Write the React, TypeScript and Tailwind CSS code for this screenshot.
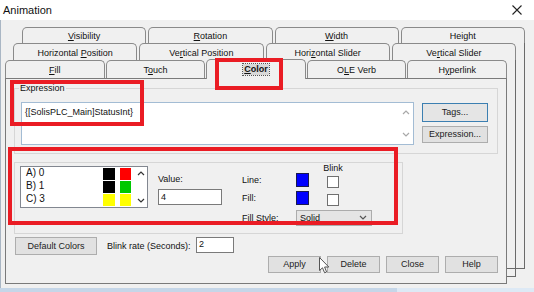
import React from "react";

function Lbl({ text, u }: { text: string; u?: number }) {
  if (u === undefined) return <span>{text}</span>;
  return (
    <span>
      {text.slice(0, u)}
      <u>{text[u]}</u>
      {text.slice(u + 1)}
    </span>
  );
}

const tabBase =
  "flex-1 border-t border-l border-r border-[#8a8a8a] rounded-t-[5px] bg-[#f0f0f0] flex justify-center items-center leading-none text-[#111]";

function Chevron({ up, color }: { up?: boolean; color: string }) {
  return (
    <svg width="8" height="6" viewBox="0 0 8 6">
      <polyline
        points={up ? "1,5 4,2 7,5" : "1,1 4,4 7,1"}
        fill="none"
        stroke={color}
        strokeWidth="1.2"
      />
    </svg>
  );
}

const Btn = ({ children, w, h, focus }: { children: React.ReactNode; w: string; h: string; focus?: boolean }) => (
  <div
    className={`${w} ${h} border ${focus ? "border-[#3c7fb1] bg-[#e5e5e5]" : "border-[#adadad] bg-[#e1e1e1]"} flex items-center justify-center leading-none text-[#222]`}
  >
    {children}
  </div>
);

export default function App() {
  const rows = [
    { t: "A) 0", c1: "bg-[#000000]", c2: "bg-[#ff0000]" },
    { t: "B) 1", c1: "bg-[#000000]", c2: "bg-[#00c800]" },
    { t: "C) 3", c1: "bg-[#ffff00]", c2: "bg-[#ffff00]" },
  ];
  return (
    <div className="relative w-[534px] h-[292px] overflow-hidden bg-[#f0f0f0] font-['Liberation_Sans',Arial,sans-serif] text-[9px] text-[#111]">
      {/* Title bar */}
      <div className="h-[20px] bg-white flex items-center justify-between pl-[3px] pr-[12px]">
        <span className="text-[11px] text-[#111]">Animation</span>
        <svg width="10" height="10" viewBox="0 0 10 10">
          <path d="M0.5 0.5 L9.5 9.5 M9.5 0.5 L0.5 9.5" stroke="#222" strokeWidth="1.1" />
        </svg>
      </div>

      {/* Body */}
      <div className="relative h-[268px] pt-[7px] shadow-[inset_1px_0_0_#a9b6c4]">
        {/* back pages edges */}
        <div className="absolute left-[22px] top-[23px] w-[503px] h-[226px] border-r border-b border-[#6a6a6a]" />
        <div className="absolute left-[13px] top-[39px] w-[503px] h-[218px] border-r border-b border-[#6a6a6a]" />

        {/* Row 1 */}
        <div className="ml-[22px] w-[503px] h-[16px] flex gap-[2px]">
          <div className={`${tabBase} pt-[2px]`}><Lbl text="Visibility" u={0} /></div>
          <div className={`${tabBase} pt-[2px]`}><Lbl text="Rotation" u={0} /></div>
          <div className={`${tabBase} pt-[2px]`}><Lbl text="Width" u={0} /></div>
          <div className={`${tabBase} pt-[2px]`}><Lbl text="Height" /></div>
        </div>
        {/* Row 2 */}
        <div className="relative ml-[13px] w-[503px] h-[17px] flex gap-[2px]">
          <div className={`${tabBase} pt-[2px]`}><Lbl text="Horizontal Position" u={11} /></div>
          <div className={`${tabBase} pt-[2px]`}><Lbl text="Vertical Position" u={2} /></div>
          <div className={`${tabBase} pt-[2px]`}><Lbl text="Horizontal Slider" u={4} /></div>
          <div className={`${tabBase} pt-[2px]`}><Lbl text="Vertical Slider" u={2} /></div>
        </div>
        {/* Row 3 */}
        <div className="relative ml-[5px] w-[502px] h-[18px] flex gap-[1px]">
          <div className={`${tabBase} pt-[1px]`}><Lbl text="Fill" u={0} /></div>
          <div className={`${tabBase} pt-[1px]`}><Lbl text="Touch" u={1} /></div>
          <div className={`${tabBase} relative z-20 self-start -mt-[1px] h-[20px] pb-[1px]`}>
            <span className="font-bold outline outline-1 outline-dotted outline-[#555] bg-[#d8d8d8] px-[1px] py-[1px]">
              <u>C</u>olor
            </span>
          </div>
          <div className={`${tabBase} pt-[1px]`}><Lbl text="OLE Verb" u={1} /></div>
          <div className={`${tabBase} pt-[1px]`}><Lbl text="Hyperlink" u={1} /></div>
        </div>

        {/* Front page */}
        <div className="relative z-10 ml-[5px] w-[502px] h-[206px] border border-[#7a7a7a] bg-[#f0f0f0] flex flex-col">
          {/* Expression group */}
          <div className="ml-[8px] mt-[9px] w-[484px] h-[66px] border border-[#d6d6d6] flex flex-col">
            <div className="-mt-[6px] ml-[4px] px-[1px] w-fit h-[10px] leading-[10px] bg-[#f0f0f0]">Expression</div>
            <div className="flex mt-[9px] ml-[6px]">
              <div className="w-[393px] h-[43px] border border-[#a3bcd4] bg-white flex">
                <div className="flex-1 pl-[3px] pt-[4px] leading-[10px]">{"{[SolisPLC_Main]StatusInt}"}</div>
                <div className="w-[14px] flex flex-col justify-between items-center py-[6px]">
                  <Chevron up color="#a8a8a8" />
                  <Chevron color="#a8a8a8" />
                </div>
              </div>
              <div className="ml-[8px] mt-[1px] flex flex-col gap-[4px]">
                <Btn w="w-[66px]" h="h-[19px]" focus>Tags...</Btn>
                <Btn w="w-[66px]" h="h-[17px]">Expression...</Btn>
              </div>
            </div>
          </div>

          {/* Color group */}
          <div className="ml-[8px] mt-[8px] w-[389px] h-[72px] border border-[#d6d6d6] flex items-start">
            <div className="ml-[5px] mt-[3px] w-[128px] h-[42px] border border-[#828790] bg-white flex">
              <div className="flex flex-col">
                {rows.map((r) => (
                  <div key={r.t} className="h-[14px] flex items-center">
                    <div className="w-[82px] pl-[5px] text-[10px] leading-[10px] -mt-[2px]">{r.t}</div>
                    <div className={`w-[12px] h-[12px] ${r.c1}`} />
                    <div className={`ml-[5px] w-[11px] h-[12px] ${r.c2}`} />
                  </div>
                ))}
              </div>
              <div className="ml-auto w-[12px] flex flex-col justify-between items-center py-[3px]">
                <Chevron up color="#333" />
                <Chevron color="#333" />
              </div>
            </div>

            <div className="ml-[10px] mt-[11px] flex flex-col">
              <div className="h-[10px] leading-[10px]">Value:</div>
              <div className="mt-[5px] w-[64px] h-[16px] border border-[#7a7a7a] bg-white pl-[2px] leading-[14px]">4</div>
            </div>

            <div className="ml-[20px] flex flex-col">
              <div className="h-[10px] pl-[81px] flex">
                <div className="w-[20px] text-center leading-[10px]">Blink</div>
              </div>
              <div className="h-[14px] flex items-center">
                <div className="w-[54px] leading-[10px]">Line:</div>
                <div className="w-[13px] h-[14px] bg-[#0000ff] border border-[#1a1a50]" />
                <div className="ml-[14px] w-[20px] flex justify-center">
                  <div className="mt-[3px] w-[12px] h-[12px] border border-[#707070] bg-white" />
                </div>
              </div>
              <div className="mt-[4px] h-[14px] flex items-center">
                <div className="w-[54px] leading-[10px]">Fill:</div>
                <div className="w-[13px] h-[14px] bg-[#0000ff] border border-[#1a1a50]" />
                <div className="ml-[14px] w-[20px] flex justify-center">
                  <div className="mt-[3px] w-[12px] h-[12px] border border-[#707070] bg-white" />
                </div>
              </div>
              <div className="mt-[5px] h-[16px] flex items-center">
                <div className="w-[54px] leading-[10px]">Fill Style:</div>
                <div className="w-[76px] h-[16px] border border-[#acacac] bg-[#e5e5e5] flex items-center justify-between pl-[3px] pr-[4px]">
                  <span className="leading-[10px]">Solid</span>
                  <Chevron color="#555" />
                </div>
              </div>
            </div>
          </div>

          {/* Bottom row */}
          <div className="ml-[9px] mt-[3px] flex items-start">
            <Btn w="w-[82px]" h="h-[18px]">Default Colors</Btn>
            <div className="ml-[10px] mt-[4px] w-[89px] leading-[10px]">Blink rate (Seconds):</div>
            <div className="w-[38px] h-[16px] border border-[#7a7a7a] bg-white pl-[2px] leading-[12px]">2</div>
          </div>

          {/* Button row */}
          <div className="mt-[1px] flex justify-end gap-[6px] pr-[8px]">
            <Btn w="w-[53px]" h="h-[17px]">Apply</Btn>
            <Btn w="w-[53px]" h="h-[17px]">Delete</Btn>
            <Btn w="w-[53px]" h="h-[17px]">Close</Btn>
            <Btn w="w-[53px]" h="h-[17px]">Help</Btn>
          </div>
        </div>
      </div>

      {/* Bottom window edge */}
      <div className="h-[4px] flex">
        <div className="w-[397px] bg-[#c5d6e8]" />
        <div className="flex-1 bg-[#dde9f5]" />
      </div>

      {/* Red annotation rectangles */}
      <div className="absolute left-[215px] top-[58px] w-[68px] h-[32px] border-[4px] border-[#ea1c24] z-30" />
      <div className="absolute left-[10px] top-[80px] w-[134px] h-[46px] border-[4px] border-[#ea1c24] z-30" />
      <div className="absolute left-[8px] top-[147px] w-[390px] h-[78px] border-[4px] border-[#ea1c24] z-30" />

      {/* Mouse cursor */}
      <svg className="absolute left-[319px] top-[257px] z-30" width="11" height="17" viewBox="0 0 11 17">
        <path d="M0.5 0.5 L0.5 13.5 L3.5 10.8 L5.6 15.8 L7.6 15 L5.6 10 L9.8 10 Z" fill="#fff" stroke="#555" strokeWidth="1" />
      </svg>
    </div>
  );
}
